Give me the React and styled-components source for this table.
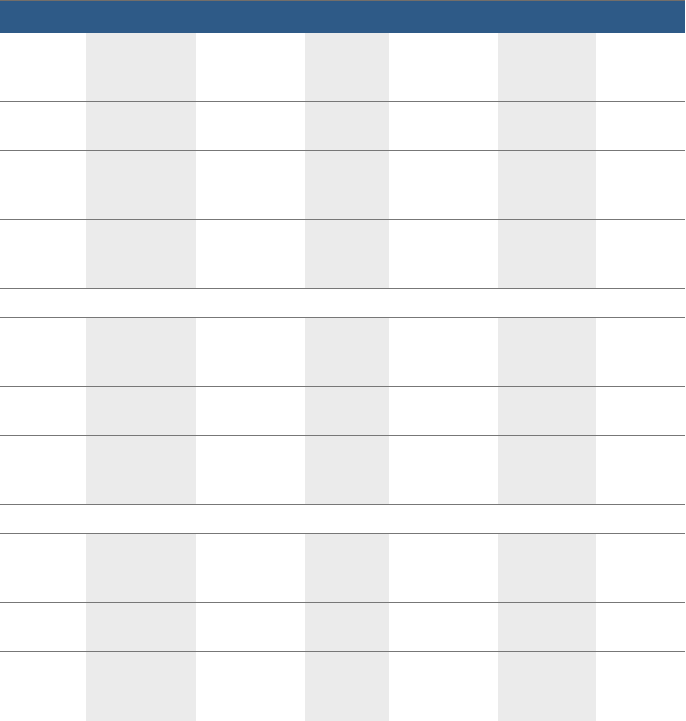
import styled, { createGlobalStyle } from "styled-components";

const GlobalStyle = createGlobalStyle`
  html, body {
    margin: 0;
    padding: 0;
    background: #fff;
    font-family: "Liberation Sans", Arial, sans-serif;
  }
`;

const Table = styled.table`
  width: 685px;
  border-collapse: collapse;
  table-layout: fixed;
`;

const HeadRow = styled.tr`
  height: 32px;
  background-color: #2e5a87;
  border-top: 1px solid #736e69;
`;

const HeadCell = styled.th`
  padding: 0;
`;

const Row = styled.tr`
  height: ${(p) => p.$h}px;
  border-bottom: 1px solid #777777;

  &:last-child {
    border-bottom: none;
  }
`;

const Cell = styled.td`
  padding: 0;
  background-color: ${(p) => (p.$shade ? "#ebebeb" : "transparent")};
`;

const SectionCell = styled.td`
  padding: 0;
`;

const widths = [86, 110, 109, 84, 109, 98, 89];

const rows = [
  "tall", "short", "tall", "tall", "section",
  "tall", "short", "tall", "section",
  "tall", "short", "tall",
];

const heights = { tall: 69, short: 49, section: 29 };

const App = () => {
  return (
    <>
      <GlobalStyle />
      <Table>
        <colgroup>
          {widths.map((w, i) => (
            <col key={i} style={{ width: w }} />
          ))}
        </colgroup>
        <thead>
          <HeadRow>
            {widths.map((_, i) => (
              <HeadCell key={i} />
            ))}
          </HeadRow>
        </thead>
        <tbody>
          {rows.map((kind, r) =>
            kind === "section" ? (
              <Row key={r} $h={heights.section}>
                <SectionCell colSpan={7} />
              </Row>
            ) : (
              <Row key={r} $h={heights[kind]}>
                {widths.map((_, i) => (
                  <Cell key={i} $shade={i % 2 === 1} />
                ))}
              </Row>
            )
          )}
        </tbody>
      </Table>
    </>
  );
};

export default App;
